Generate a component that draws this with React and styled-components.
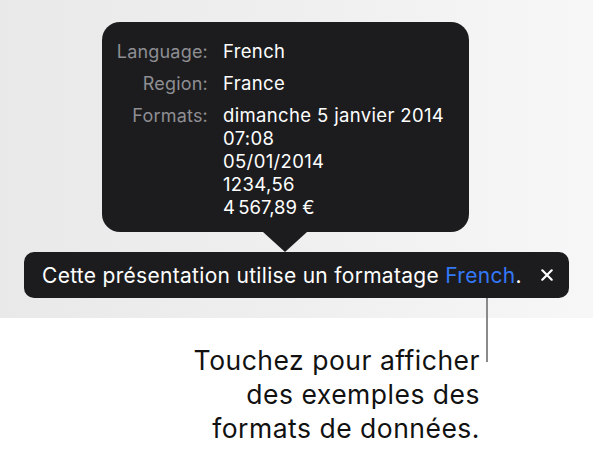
import React from 'react';
import styled, { createGlobalStyle } from 'styled-components';

const GlobalStyle = createGlobalStyle`
  html, body {
    margin: 0;
    padding: 0;
    background: #ffffff;
  }
  body {
    font-family: "Inter", sans-serif;
    -webkit-font-smoothing: antialiased;
  }
`;

const rows = [
  { label: 'Language:', values: ['French'] },
  { label: 'Region:', values: ['France'] },
  {
    label: 'Formats:',
    values: ['dimanche 5 janvier 2014', '07:08', '05/01/2014', '1234,56', '4\u202f567,89 €'],
  },
];

export default function App() {
  return (
    <>
      <GlobalStyle />
      <Stage>
        <Popover>
          {rows.map((row) => (
            <Row key={row.label}>
              <Label>{row.label}</Label>
              <Values>
                {row.values.map((v) => (
                  <div key={v}>{v}</div>
                ))}
              </Values>
            </Row>
          ))}
        </Popover>
        <Banner>
          <span>
            Cette présentation utilise un formatage <Accent>French</Accent>.
          </span>
          <Close aria-label='fermer'>
            <svg width='12' height='12' viewBox='0 0 12 12'>
              <path d='M1.3 1.3 L10.7 10.7 M10.7 1.3 L1.3 10.7' stroke='#fff' strokeWidth='2.2' strokeLinecap='round' />
            </svg>
          </Close>
        </Banner>
      </Stage>
      <Caption>
        Touchez pour afficher
        <br />
        des exemples des
        <br />
        formats de données.
      </Caption>
    </>
  );
}

const Stage = styled.div`
  height: 318px;
  box-sizing: border-box;
  padding-top: 22px;
  background: linear-gradient(90deg, #e9e9e9 0%, #efefef 50%, #f7f7f7 100%);
`;

const Popover = styled.div`
  position: relative;
  margin-left: 102px;
  width: 367px;
  height: 210px;
  box-sizing: border-box;
  padding: 18px 0 0 0;
  background: #1c1c1e;
  border-radius: 18px;
  display: flex;
  flex-direction: column;
  gap: 9px;

  &::after {
    content: '';
    position: absolute;
    left: 161px;
    top: 100%;
    width: 0;
    height: 0;
    border-left: 22px solid transparent;
    border-right: 22px solid transparent;
    border-top: 20px solid #1c1c1e;
  }
`;

const Row = styled.div`
  display: grid;
  grid-template-columns: 106px 1fr;
  column-gap: 15px;
  line-height: 23px;
`;

const Label = styled.div`
  text-align: right;
  color: #8e8e93;
  font-size: 18px;
  letter-spacing: 0.2px;
`;

const Values = styled.div`
  color: #ffffff;
  font-size: 18.5px;
  letter-spacing: 0.35px;
`;

const Banner = styled.div`
  position: relative;
  margin: 20px 0 0 24px;
  width: 545px;
  height: 46px;
  box-sizing: border-box;
  padding: 0 16.5px 0 18px;
  background: #1c1c1e;
  border-radius: 10px;
  display: flex;
  align-items: center;
  justify-content: space-between;
  color: #ffffff;
  font-size: 21px;
  letter-spacing: 0.3px;

  &::after {
    content: '';
    position: absolute;
    left: 462px;
    top: 100%;
    width: 2px;
    height: 64px;
    background: #8a8a8a;
  }
`;

const Accent = styled.span`
  color: #3478f6;
`;

const Close = styled.span`
  display: flex;
  align-items: center;
`;

const Caption = styled.p`
  margin: 25px 0 0 0;
  padding-right: 113px;
  text-align: right;
  font-size: 26.5px;
  letter-spacing: 0.5px;
  line-height: 34px;
  color: #111111;
`;
